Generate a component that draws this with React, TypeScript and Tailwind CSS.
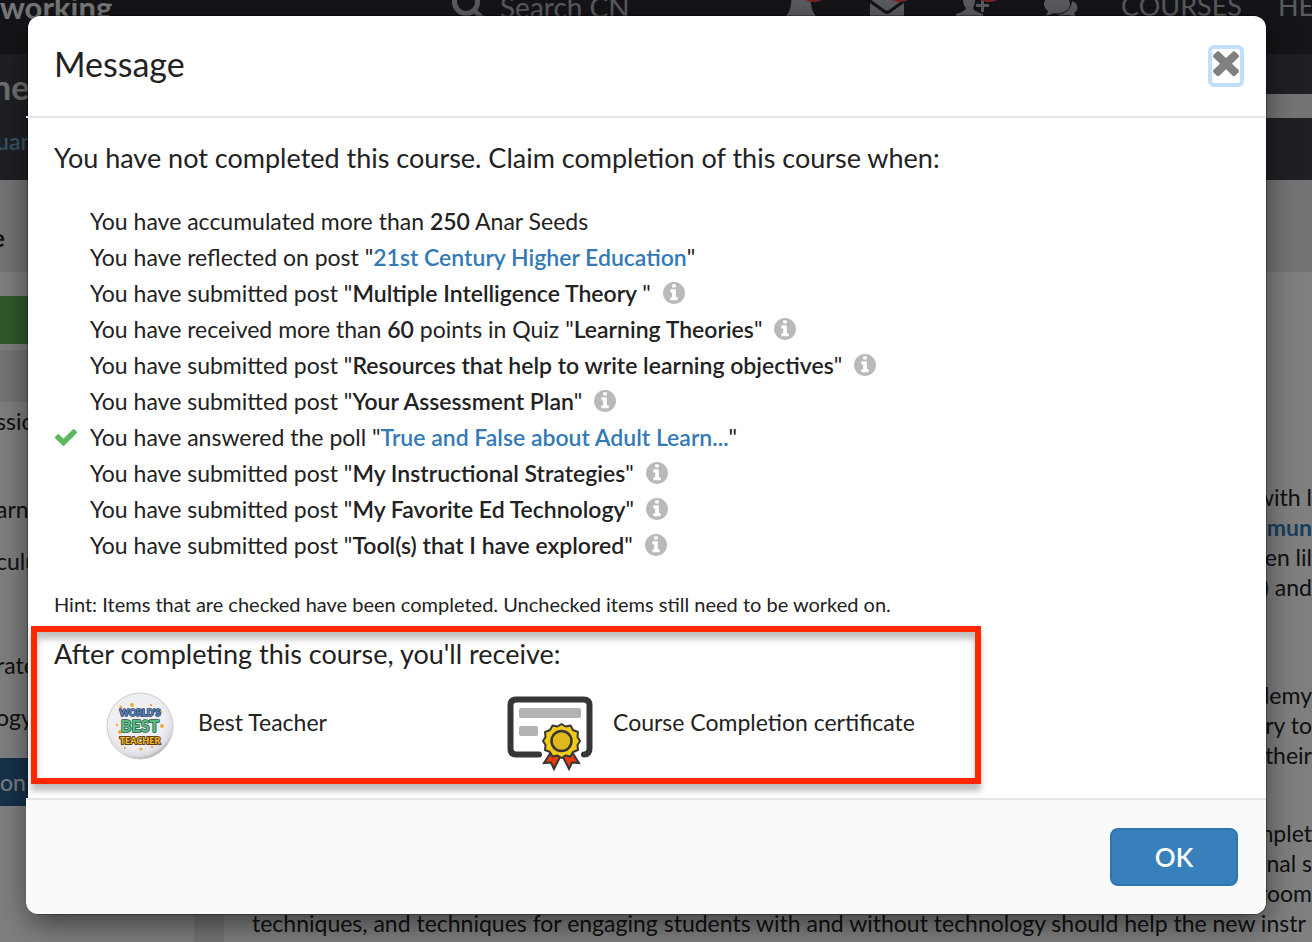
import React from "react";

interface Requirement {
  before: string;
  amount?: string;
  after?: string;
  title?: string;
  end?: string;
  link?: boolean;
  info?: boolean;
  done?: boolean;
}

const requirements: Requirement[] = [
  { before: "You have accumulated more than ", amount: "250", after: " Anar Seeds" },
  { before: 'You have reflected on post "', title: "21st Century Higher Education", end: '"', link: true },
  { before: 'You have submitted post "', title: "Multiple Intelligence Theory ", end: '"', info: true },
  { before: "You have received more than ", amount: "60", after: ' points in Quiz "', title: "Learning Theories", end: '"', info: true },
  { before: 'You have submitted post "', title: "Resources that help to write learning objectives", end: '"', info: true },
  { before: 'You have submitted post "', title: "Your Assessment Plan", end: '"', info: true },
  { before: 'You have answered the poll "', title: "True and False about Adult Learn...", end: '"', link: true, done: true },
  { before: 'You have submitted post "', title: "My Instructional Strategies", end: '"', info: true },
  { before: 'You have submitted post "', title: "My Favorite Ed Technology", end: '"', info: true },
  { before: 'You have submitted post "', title: "Tool(s) that I have explored", end: '"', info: true },
];

function CheckIcon() {
  return (
    <svg viewBox="121 334 1550 1188" className="ml-px w-[22px] h-[17px]" fill="#5cb85c" aria-label="Completed">
      <path d="M1671 566q0 40-28 68l-724 724-136 136q-28 28-68 28t-68-28l-136-136-362-362q-28-28-28-68t28-68l136-136q28-28 68-28t68 28l294 295 656-657q28-28 68-28t68 28l136 136q28 28 28 68z" />
    </svg>
  );
}

function CloseIcon() {
  return (
    <svg viewBox="302 302 1188 1252" className="w-[26px] h-[26px]" preserveAspectRatio="none" fill="#808080">
      <path d="M1490 1322q0 40-28 68l-136 136q-28 28-68 28t-68-28l-294-294-294 294q-28 28-68 28t-68-28l-136-136q-28-28-28-68t28-68l294-294-294-294q-28-28-28-68t28-68l136-136q28-28 68-28t68 28l294 294 294-294q28-28 68-28t68 28l136 136q28 28 28 68t-28 68l-294 294 294 294q28 28 28 68z" />
    </svg>
  );
}

function InfoIcon() {
  return (
    <svg viewBox="128 128 1536 1536" className="w-[22px] h-[22px] ml-3" fill="#b9b9b9">
      <path d="M1152 1376v-160q0-14-9-23t-23-9h-96v-512q0-14-9-23t-23-9h-320q-14 0-23 9t-9 23v160q0 14 9 23t23 9h96v320h-96q-14 0-23 9t-9 23v160q0 14 9 23t23 9h448q14 0 23-9t9-23zm-128-896v-160q0-14-9-23t-23-9h-192q-14 0-23 9t-9 23v160q0 14 9 23t23 9h192q14 0 23-9t9-23zm640 416q0 209-103 385.5t-279.5 279.5-385.5 103-385.5-103-279.5-279.5-103-385.5 103-385.5 279.5-279.5 385.5-103 385.5 103 279.5 279.5 103 385.5z" />
    </svg>
  );
}

function TeacherBadge() {
  return (
    <svg viewBox="0 0 68 68" className="w-[68px] h-[68px]">
      <defs>
        <radialGradient id="pin" cx="45%" cy="40%" r="60%">
          <stop offset="0.7" stopColor="#eeeef3" />
          <stop offset="0.92" stopColor="#dddde4" />
          <stop offset="1" stopColor="#b9b4b4" />
        </radialGradient>
      </defs>
      <circle cx="34" cy="34" r="33" fill="url(#pin)" stroke="#d5cbc4" />
      <g fill="#eea83c">
        <circle cx="15" cy="15" r="1.5" />
        <circle cx="26" cy="13" r="2" />
        <circle cx="45" cy="13" r="1.2" />
        <circle cx="55" cy="20" r="1.2" />
        <circle cx="14" cy="40" r="2" />
        <circle cx="11" cy="33" r="1.2" />
        <circle cx="56" cy="34" r="2" />
        <circle cx="19" cy="56" r="1.2" />
        <circle cx="35" cy="57" r="1.5" />
        <circle cx="46" cy="55" r="1.2" />
      </g>
      <g fontFamily="Lato, sans-serif" fontWeight="900" textAnchor="middle" strokeLinejoin="round" paintOrder="stroke">
        <text x="34" y="24" fontSize="9" fill="#5f86b8" stroke="#2c4168" strokeWidth="1.5">WORLD'S</text>
        <text x="34" y="40" fontSize="16" fill="#58bd83" stroke="#22563d" strokeWidth="1.5">BEST</text>
        <text x="34" y="52" fontSize="9" fill="#f0be2d" stroke="#5c3d14" strokeWidth="2">TEACHER</text>
      </g>
    </svg>
  );
}

function CertificateIcon() {
  return (
    <svg viewBox="0 0 86 75" className="w-[86px] h-[75px]">
      <path d="M32 58.500H9.500Q3.500 58.500 3.500 52.500V9.500Q3.500 3.500 9.500 3.500H76.500Q82.500 3.500 82.500 9.500V52.500Q82.500 58.500 77 58.500" fill="none" stroke="#363636" strokeWidth="6" strokeLinecap="round" />
      <rect x="12" y="12" width="62" height="10" rx="2" fill="#b3b3b3" />
      <rect x="12" y="30" width="19" height="10" rx="2" fill="#b3b3b3" />
      <g stroke="#363636" strokeWidth="2" strokeLinejoin="miter">
        <path d="M44 56L37 67L44 66.500L47 73L54 59Z" fill="#e63c0a" />
        <path d="M65 56L72 67L65 66.500L62 73L55 59Z" fill="#e63c0a" />
      </g>
      <path
        d="M54.500 28L58.500 30.500L63.500 29.500L66 34L71 36L70.500 41L73 45L70.500 49L71 54L66 56L63.500 60.500L58.500 59.500L54.500 62L50.500 59.500L45.500 60.500L43 56L38 54L38.500 49L36 45L38.500 41L38 36L43 34L45.500 29.500L50.500 30.500Z"
        fill="#f2ca1a"
        stroke="#363636"
        strokeWidth="2"
        strokeLinejoin="round"
      />
      <circle cx="54.500" cy="45" r="10" fill="#e0b81c" stroke="#363636" strokeWidth="2.500" />
    </svg>
  );
}

function TopBar() {
  return (
    <header className="flex h-[54px] items-start overflow-hidden bg-[#2a2b32] text-[#b4b6be]">
      <div className="w-[452px] shrink-0 -mt-4 text-[31px] leading-[46px] font-bold text-[#f0f0f0]">working</div>
      <div className="flex w-[334px] shrink-0 -mt-4 gap-4 text-[28px] leading-[46px]">
        <svg viewBox="0 0 32 34" className="w-8 h-[34px]" fill="none" stroke="currentColor" strokeWidth="5">
          <circle cx="14" cy="18" r="11.500" />
          <path d="M22 26L31 35" />
        </svg>
        <span>Search CN</span>
      </div>
      <div className="flex w-[335px] shrink-0 -mt-4 gap-[54px]">
        <svg viewBox="0 0 32 34" className="w-8 h-[34px] overflow-visible" fill="currentColor">
          <path d="M5 20C6 2 24 2 25 20Q26 28 30 32H0Q4 28 5 20Z" />
          <ellipse cx="28" cy="12" rx="11" ry="6" fill="#f04848" />
        </svg>
        <svg viewBox="0 0 34 34" className="-ml-0.5 w-[34px] h-[34px] overflow-visible" fill="currentColor">
          <path d="M0 19L14 29Q17 31 20 29L34 19V34H0Z" />
          <path d="M0 12H34V15L19 26Q17 27 15 26L0 15Z" />
          <ellipse cx="30" cy="12" rx="11" ry="6" fill="#f04848" />
        </svg>
        <svg viewBox="0 0 34 34" className="w-[34px] h-[34px] overflow-visible" fill="currentColor">
          <path d="M5 10H18Q17 20 15 24Q15 27 25 30V34H-2V30Q8 27 8 24Q4 20 5 10Z" />
          <path d="M18 20H31V23H18ZM23 15H26V28H23Z" />
          <ellipse cx="31" cy="12" rx="11" ry="6" fill="#f04848" />
        </svg>
        <svg viewBox="0 0 34 34" className="-ml-0.5 w-[34px] h-[34px] overflow-visible" fill="currentColor">
          <ellipse cx="13" cy="20" rx="13" ry="9.500" />
          <path d="M5 25L2 32L13 28Z" />
          <path d="M28 17Q35 20 33 26Q32 28 30 29L32 33L24 31Q17 32 13 31Q27 29 28 17Z" />
        </svg>
      </div>
      <nav className="flex shrink-0 -mt-3 gap-9 text-[27px] leading-9">
        <a href="#courses">COURSES</a>
        <a href="#help">HE</a>
      </nav>
    </header>
  );
}

function PageBehind() {
  return (
    <div className="flex h-screen flex-col overflow-hidden bg-white text-[#222] whitespace-nowrap">
      <TopBar />
      <div className="flex h-[126px] shrink-0 justify-between bg-[#3e4148]">
        <div className="-ml-2 pt-2">
          <div className="text-[34px] leading-[50px] font-bold text-[#e0e0e0]">ne</div>
          <a href="#author" className="block pt-[11px] pl-1 text-[23px] leading-9 font-semibold text-[#74a3c8]">uan</a>
        </div>
        <div className="mt-10 h-6 w-24 bg-[#e9e9e9]" />
      </div>
      <div className="h-[92px] shrink-0 bg-[#e9e9e9] pt-10 text-2xl leading-9 font-bold">
        <div className="-ml-2">e</div>
      </div>
      <div className="flex min-h-0 flex-1 text-[23px] leading-[30px]">
        <aside className="w-[194px] shrink-0 pt-6">
          <div className="h-12 bg-[#62b35a]" />
          <div className="mt-1.5 h-[52px] bg-[#e9e9e9]" />
          <div className="-ml-1">
            <div className="pt-1">ssion</div>
            <div className="pt-[58px]">arn</div>
            <div className="pt-[22px]">culum</div>
            <div className="pt-[74px]">rate</div>
            <div className="pt-[22px]">ogy</div>
          </div>
          <button className="mt-[26px] h-12 w-40 bg-[#2a6496] text-left text-[23px] text-white">on</button>
        </aside>
        <div className="w-[30px] shrink-0 bg-[#e9e9e9]" />
        <article className="min-w-0 flex-1 overflow-hidden pt-[210px] pl-7">
          <div className="text-right">
            <p>with l</p>
            <p className="font-bold text-[#337ab7]">mmun</p>
            <p>en lil</p>
            <p>) and</p>
          </div>
          <div className="pt-[78px] text-right">
            <p>demy</p>
            <p>ry to</p>
            <p>their</p>
          </div>
          <div className="pt-12 text-right">
            <p>mplet</p>
            <p>onal s</p>
            <p>room</p>
          </div>
          <p>techniques, and techniques for engaging students with and without technology should help the new instr</p>
        </article>
      </div>
    </div>
  );
}

function RequirementRow({ item }: { item: Requirement }) {
  return (
    <li className="flex h-9 items-center">
      <span className="w-9 shrink-0">{item.done && <CheckIcon />}</span>
      <span className="whitespace-pre">
        {item.before}
        {item.amount && <strong className="font-semibold">{item.amount}</strong>}
        {item.after}
        {item.link ? (
          <a href="#post" className="font-semibold text-[#337ab7]">{item.title}</a>
        ) : (
          <strong className="font-semibold">{item.title}</strong>
        )}
        {item.end}
      </span>
      {item.info && <InfoIcon />}
    </li>
  );
}

export default function App() {
  return (
    <div className="relative font-['Lato','Noto_Sans',sans-serif]">
      <PageBehind />

      <div className="absolute inset-0 bg-black/50 pt-4 pr-[46px] pl-7">
        <div role="dialog" aria-labelledby="message-title" className="rounded-xl bg-white text-[#222] shadow-[0_0_0_1px_rgba(0,0,0,0.3),0_10px_30px_rgba(0,0,0,0.5)]">
          <div className="flex h-[100px] items-start justify-between pt-6 pr-[22px] pl-[26px]">
            <h1 id="message-title" className="text-[34px] leading-[48px]">Message</h1>
            <button aria-label="Close" className="mt-[5px] flex h-[42px] w-9 items-start justify-center rounded-md border-4 border-[#bfdfff] pt-px">
              <CloseIcon />
            </button>
          </div>
          <hr className="-ml-0.5 border-t-2 border-[#e5e5e5]" />

          <div className="pt-[22px] pb-[14px]">
            <div className="px-[26px]">
              <h2 className="text-[27px] leading-9">You have not completed this course. Claim completion of this course when:</h2>
              <ul className="pt-[27px] text-[23px]">
                {requirements.map((item, i) => (
                  <RequirementRow key={i} item={item} />
                ))}
              </ul>
              <p className="pt-[26px] text-xl leading-[30px]">
                Hint: Items that are checked have been completed. Unchecked items still need to be worked on.
              </p>
            </div>

            {/* Rewards */}
            <section className="mt-[7px] ml-[3px] h-[158px] max-w-[950px] border-6 border-[#ff2600] pl-[17px] shadow-[0_7px_6px_rgba(0,0,0,0.25),inset_0_7px_6px_rgba(0,0,0,0.25)]">
              <h2 className="pt-1 text-[27px] leading-9">After completing this course, you'll receive:</h2>
              <div className="flex items-start pt-5 pl-[52px] text-[23px] leading-[60px]">
                <div className="flex w-[401px] items-start gap-6">
                  <TeacherBadge />
                  <span>Best Teacher</span>
                </div>
                <div className="flex items-start gap-5">
                  <div className="pt-1">
                    <CertificateIcon />
                  </div>
                  <span>Course Completion certificate</span>
                </div>
              </div>
            </section>
          </div>

          <div className="-ml-0.5 flex h-[116px] items-center justify-end rounded-b-xl border-t-2 border-[#e5e5e5] bg-[#fafafa] pr-7">
            <button className="h-[58px] w-32 rounded-lg border-2 border-[#2e75b0] bg-[#3880bc] text-[26px] font-semibold text-white">OK</button>
          </div>
        </div>
      </div>
    </div>
  );
}
